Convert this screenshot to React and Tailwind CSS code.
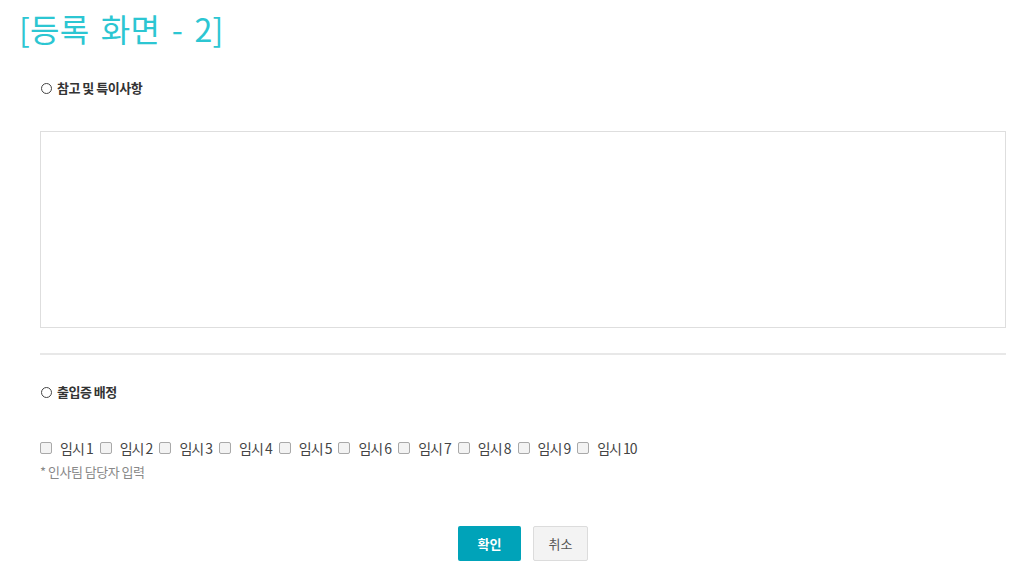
export default function App() {
  const items = Array.from({ length: 10 }, (_, i) => i + 1);
  const font = { fontFamily: '"Noto Sans CJK KR", "Noto Sans", sans-serif' };
  return (
    <div className="w-[1022px] h-[580px] bg-white overflow-hidden" style={font}>
      <div className="pl-[19px] pt-[8px] h-[44px] text-[32px] leading-[40px] text-[#2cc6d2] font-normal tracking-[0.25px] [word-spacing:4px]">
        [등록 화면 - 2]
      </div>
      <div className="pl-[40px] pr-[16px]">
        <div className="mt-[34px] h-[20px] flex items-center text-[13px] font-bold text-[#333] tracking-[-0.5px]">
          <span className="inline-block w-[11px] h-[11px] rounded-full border border-[#444] ml-[1px] mr-[5px]"></span>
          참고 및 특이사항
        </div>
        <textarea className="block mt-[33px] w-full h-[197px] border border-[#dedede] resize-none outline-none"></textarea>
        <div className="mt-[25px] h-[2px] bg-[#e8e8e8]"></div>
        <div className="mt-[27px] h-[20px] flex items-center text-[13px] font-bold text-[#333] tracking-[-0.5px]">
          <span className="inline-block w-[11px] h-[11px] rounded-full border border-[#444] ml-[1px] mr-[5px]"></span>
          출입증 배정
        </div>
        <div className="mt-[37px] h-[18px] flex items-center text-[14px] text-[#444] tracking-[-1px]">
          {items.map((n) => (
            <div key={n} className="flex items-center mr-[7px]">
              <span className="inline-block w-[12px] h-[12px] rounded-[2px] border border-[#a9a9a9] bg-[#f3f3f3] mr-[8px]"></span>
              <span>임시 {n}</span>
            </div>
          ))}
        </div>
        <div className="mt-[6px] h-[18px] flex items-center text-[13px] text-[#888] tracking-[-0.5px]">
          * 인사팀 담당자 입력
        </div>
        <div className="mt-[45px] flex justify-center gap-[12px]">
          <button className="w-[63px] h-[35px] bg-[#00a3b9] text-white text-[13px] font-bold rounded-[2px]">확인</button>
          <button className="w-[55px] h-[35px] bg-[#f3f3f3] border border-[#dcdcdc] text-[#555] text-[13px] rounded-[2px]">취소</button>
        </div>
      </div>
    </div>
  );
}
